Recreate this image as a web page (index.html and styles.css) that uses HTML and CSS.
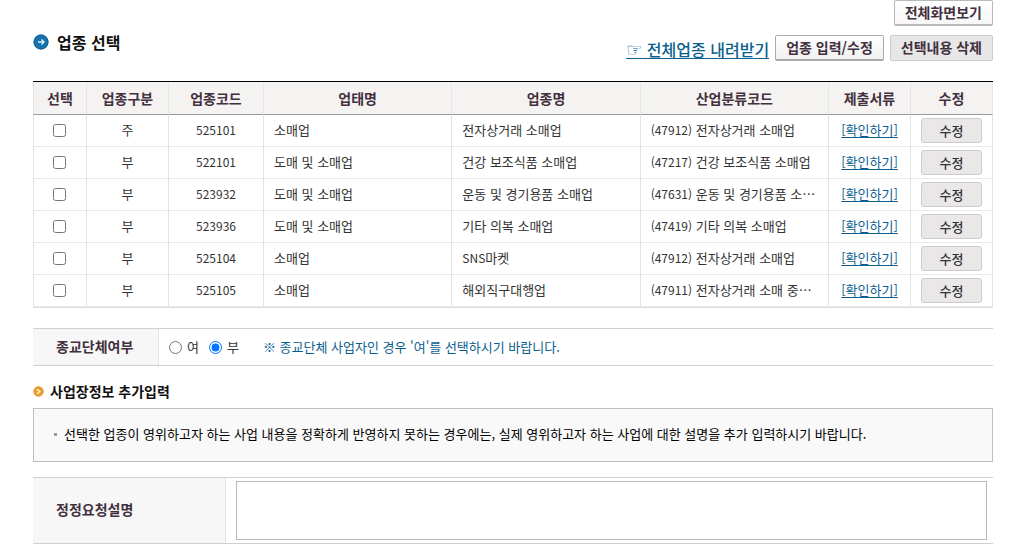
FILE: index.html
```html
<!DOCTYPE html>
<html lang="ko">
<head>
<meta charset="utf-8">
<title>업종 선택</title>
<link rel="stylesheet" href="styles.css">
</head>
<body>
<main class="page">
  <div class="view-bar"><button type="button" class="btn">전체화면보기</button></div>
  <header class="title-bar">
    <h1 class="title">
      <svg class="title-icon" viewBox="0 0 16 16" aria-hidden="true"><circle cx="8" cy="8" r="7.5" fill="#1873ad"/><circle cx="8" cy="8" r="7" fill="none" stroke="#12609a"/><path d="M5 8h6M8.500 5.500L11 8l-2.500 2.500" fill="none" stroke="#d9f3fb" stroke-width="1.400"/></svg>
      업종 선택
    </h1>
    <div class="actions">
      <a class="download" href="#"><span class="hand">☞</span> 전체업종 내려받기</a>
      <button type="button" class="btn btn-raised">업종 입력/수정</button>
      <button type="button" class="btn btn-gray">선택내용 삭제</button>
    </div>
  </header>

  <table class="grid">
    <colgroup><col class="c-check"><col class="c-small"><col class="c-code"><col><col><col><col class="c-small"><col class="c-small"></colgroup>
    <thead>
      <tr><th>선택</th><th>업종구분</th><th>업종코드</th><th>업태명</th><th>업종명</th><th>산업분류코드</th><th>제출서류</th><th>수정</th></tr>
    </thead>
    <tbody>
      <tr><td><input type="checkbox" aria-label="525101 선택"></td><td>주</td><td class="num">525101</td><td class="left">소매업</td><td class="left">전자상거래 소매업</td><td class="left"><span class="num">(47912)</span> 전자상거래 소매업</td><td><a href="#">[확인하기]</a></td><td><button type="button" class="btn-row">수정</button></td></tr>
      <tr><td><input type="checkbox" aria-label="522101 선택"></td><td>부</td><td class="num">522101</td><td class="left">도매 및 소매업</td><td class="left">건강 보조식품 소매업</td><td class="left"><span class="num">(47217)</span> 건강 보조식품 소매업</td><td><a href="#">[확인하기]</a></td><td><button type="button" class="btn-row">수정</button></td></tr>
      <tr><td><input type="checkbox" aria-label="523932 선택"></td><td>부</td><td class="num">523932</td><td class="left">도매 및 소매업</td><td class="left">운동 및 경기용품 소매업</td><td class="left"><span class="num">(47631)</span> 운동 및 경기용품 소⋯</td><td><a href="#">[확인하기]</a></td><td><button type="button" class="btn-row">수정</button></td></tr>
      <tr><td><input type="checkbox" aria-label="523936 선택"></td><td>부</td><td class="num">523936</td><td class="left">도매 및 소매업</td><td class="left">기타 의복 소매업</td><td class="left"><span class="num">(47419)</span> 기타 의복 소매업</td><td><a href="#">[확인하기]</a></td><td><button type="button" class="btn-row">수정</button></td></tr>
      <tr><td><input type="checkbox" aria-label="525104 선택"></td><td>부</td><td class="num">525104</td><td class="left">소매업</td><td class="left"><span class="num">SNS</span>마켓</td><td class="left"><span class="num">(47912)</span> 전자상거래 소매업</td><td><a href="#">[확인하기]</a></td><td><button type="button" class="btn-row">수정</button></td></tr>
      <tr><td><input type="checkbox" aria-label="525105 선택"></td><td>부</td><td class="num">525105</td><td class="left">소매업</td><td class="left">해외직구대행업</td><td class="left"><span class="num">(47911)</span> 전자상거래 소매 중⋯</td><td><a href="#">[확인하기]</a></td><td><button type="button" class="btn-row">수정</button></td></tr>
    </tbody>
  </table>

  <div class="field religion" role="radiogroup" aria-labelledby="religion-label">
    <div class="field-label" id="religion-label">종교단체여부</div>
    <div class="field-body">
      <label class="choice"><input type="radio" name="religion" value="y">여</label>
      <label class="choice"><input type="radio" name="religion" value="n" checked>부</label>
      <span class="hint">※ 종교단체 사업자인 경우 '여'를 선택하시기 바랍니다.</span>
    </div>
  </div>

  <h2 class="subtitle">
    <svg class="sub-icon" viewBox="0 0 12 12" aria-hidden="true"><circle cx="6" cy="6" r="5.500" fill="#f0a030"/><circle cx="6" cy="6" r="5" fill="none" stroke="#dd922c"/><path d="M4.500 3.500L7.300 6L4.500 8.500" fill="none" stroke="#fff5d8" stroke-width="1.600"/></svg>
    사업장정보 추가입력
  </h2>
  <ul class="notice">
    <li>선택한 업종이 영위하고자 하는 사업 내용을 정확하게 반영하지 못하는 경우에는, 실제 영위하고자 하는 사업에 대한 설명을 추가 입력하시기 바랍니다.</li>
  </ul>

  <div class="field request">
    <label class="field-label" for="request">정정요청설명</label>
    <div class="field-body"><textarea id="request"></textarea></div>
  </div>
</main>
</body>
</html>
```
FILE: styles.css
```css
* { box-sizing: border-box; }
body {
  margin: 0;
  background: #fff;
  color: #333;
  font: 13px/18px "Noto Sans CJK KR", sans-serif;
}
button, input, textarea { font: inherit; margin: 0; }
a { color: #0b5f8f; text-decoration: underline; text-underline-offset: 2px; }
.page { padding: 0 21px 0 33px; }

.view-bar { display: flex; justify-content: flex-end; }
.btn {
  height: 26px;
  padding: 0 10px 2px;
  border: 1px solid #b9b9b9;
  border-bottom-width: 2px;
  border-radius: 2px;
  background: linear-gradient(#fff, #f7f7f7);
  color: #43303f;
  font-size: 14px;
  font-weight: 700;
  line-height: 20px;
  white-space: nowrap;
}
.btn-raised { border-color: #aaa; background: linear-gradient(#fff, #f0f0f0); }
.btn-gray { border: 1px solid #ccc; background: #e7e7e7; }

.title-bar { display: flex; justify-content: space-between; margin-top: 9px; }
.title {
  display: flex;
  align-items: center;
  gap: 8px;
  height: 14px;
  margin: 0;
  color: #111;
  font-size: 16px;
}
.title-icon { width: 16px; height: 16px; }
.actions { display: flex; align-items: center; gap: 6px; }
.download { padding-top: 2px; font-size: 16px; font-weight: 500; }
.hand { font-family: "DejaVu Sans", sans-serif; font-size: 18px; font-weight: 700; }

.grid {
  width: 100%;
  margin-top: 20px;
  border-spacing: 0;
  border-top: 1px solid #000;
  border-bottom: 1px solid #ddd;
  table-layout: fixed;
}
.c-check { width: 54px; }
.c-small { width: 82px; }
.c-code { width: 95px; }
.grid th {
  height: 33px;
  padding: 0 0 1px;
  border-right: 1px solid #e6e6e6;
  border-bottom: 1px solid #999;
  background: #f5f3f1;
  color: #43303f;
  font-size: 14px;
}
.grid td {
  height: 32px;
  padding: 0 0 2px;
  border-right: 1px solid #e2e2e2;
  border-bottom: 1px solid #e8e8e8;
  text-align: center;
  white-space: nowrap;
}
.grid td:first-child { padding: 0 2px 0 0; }
.grid td:last-child { padding: 0; }
.grid th:first-child, .grid td:first-child { border-left: 1px solid #e2e2e2; }
.grid .left { padding-left: 10px; text-align: left; }
.grid .num { font-size: 12px; }
.grid input { display: block; width: 13px; height: 13px; margin: 0 auto; }
.btn-row {
  display: block;
  width: 61px;
  height: 25px;
  margin: 0 auto;
  padding: 0;
  border: 1px solid #ccc;
  border-radius: 3px;
  background: #e9e7e7;
  color: #333;
  font-weight: 500;
}

.field { display: flex; border: solid #d0d0d0; border-width: 1px 0; }
.field-label {
  display: flex;
  align-items: center;
  padding: 0 0 3px 23px;
  border-right: 1px solid #e6e6e6;
  background: #f7f7f7;
  color: #43303f;
  font-size: 14px;
  font-weight: 700;
}
.field-body { display: flex; flex: 1; align-items: center; }
.religion { height: 38px; margin-top: 20px; }
.religion .field-label { width: 126px; }
.religion .field-body { padding-left: 10px; }
.choice { display: flex; align-items: center; gap: 5px; margin-right: 10px; }
.choice input { width: 13px; height: 13px; }
.hint { margin-left: 14px; color: #0b5f8f; }

.subtitle {
  display: flex;
  align-items: center;
  gap: 6px;
  height: 18px;
  margin: 16px 0 8px;
  color: #111;
  font-size: 14px;
}
.sub-icon { width: 11px; height: 11px; }
.notice {
  margin: 0;
  padding: 16px 20px 18px;
  border: 1px solid #bfbfbf;
  background: #f9f9f9;
  color: #000;
  list-style: none;
}
.notice li { display: flex; align-items: center; gap: 7px; }
.notice li::before { content: ""; width: 3px; height: 3px; background: #999; }

.request { margin-top: 15px; }
.request .field-label { width: 193px; }
.request .field-body { padding: 3px 6px 3px 10px; }
.request textarea {
  display: block;
  width: 100%;
  height: 59px;
  border: 1px solid #b8b8b8;
  background: #fff;
  resize: none;
}
```
